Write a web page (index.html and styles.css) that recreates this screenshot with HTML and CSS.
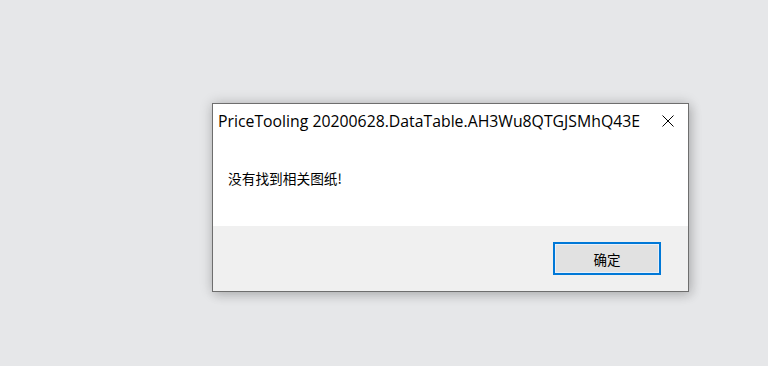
FILE: index.html
```html
<!DOCTYPE html>
<html lang="zh">
<head>
<meta charset="utf-8">
<title>PriceTooling</title>
<link rel="stylesheet" href="styles.css">
</head>
<body>
<div class="desktop">
  <div class="dialog">
    <div class="titlebar">
      <span class="title">PriceTooling 20200628.DataTable.AH3Wu8QTGJSMhQ43E</span>
      <span class="close">
        <svg width="12" height="12" viewBox="0 0 12 12"><path d="M0.5 0.5L11.5 11.5M11.5 0.5L0.5 11.5" stroke="#000" stroke-width="1" fill="none"/></svg>
      </span>
    </div>
    <div class="body">
      <p class="message">没有找到相关图纸!</p>
    </div>
    <div class="footer">
      <button class="btn">确定</button>
    </div>
  </div>
</div>
</body>
</html>
```
FILE: styles.css
```css
html, body {
  margin: 0;
  padding: 0;
  background: #e6e7e9;
  width: 768px;
  height: 366px;
  overflow: hidden;
}
.desktop {
  padding: 103px 0 0 212px;
}
.dialog {
  width: 475px;
  height: 187px;
  border: 1px solid #6e6e6e;
  background: #fff;
  display: flex;
  flex-direction: column;
  box-shadow: 0 0 12px rgba(0,0,0,0.2), 3px 4px 10px rgba(0,0,0,0.12);
}
.titlebar {
  height: 33px;
  display: flex;
  align-items: center;
  justify-content: space-between;
  padding: 0 14px 0 5px;
}
.title {
  font-family: "Open Sans", "Noto Sans", sans-serif;
  font-size: 15.8px;
  color: #000;
  white-space: nowrap;
}
.close {
  display: flex;
  width: 12px;
  height: 12px;
}
.body {
  flex: 0 0 89px;
  padding: 0 0 0 15px;
  display: flex;
  align-items: center;
}
.message {
  margin: 0 0 8px 0;
  font-family: "Noto Sans CJK SC", sans-serif;
  font-size: 13.7px;
  color: #000;
}
.footer {
  flex: 1;
  background: #f0f0f0;
  display: flex;
  justify-content: flex-end;
  align-items: center;
  padding-right: 27px;
}
.btn {
  width: 108px;
  height: 33px;
  border: 2px solid #0078d7;
  background: #e1e1e1;
  box-shadow: inset 0 0 0 1px #e8f0fa;
  font-family: "Noto Sans CJK SC", sans-serif;
  font-size: 13.5px;
  color: #000;
  padding: 0;
}
```
